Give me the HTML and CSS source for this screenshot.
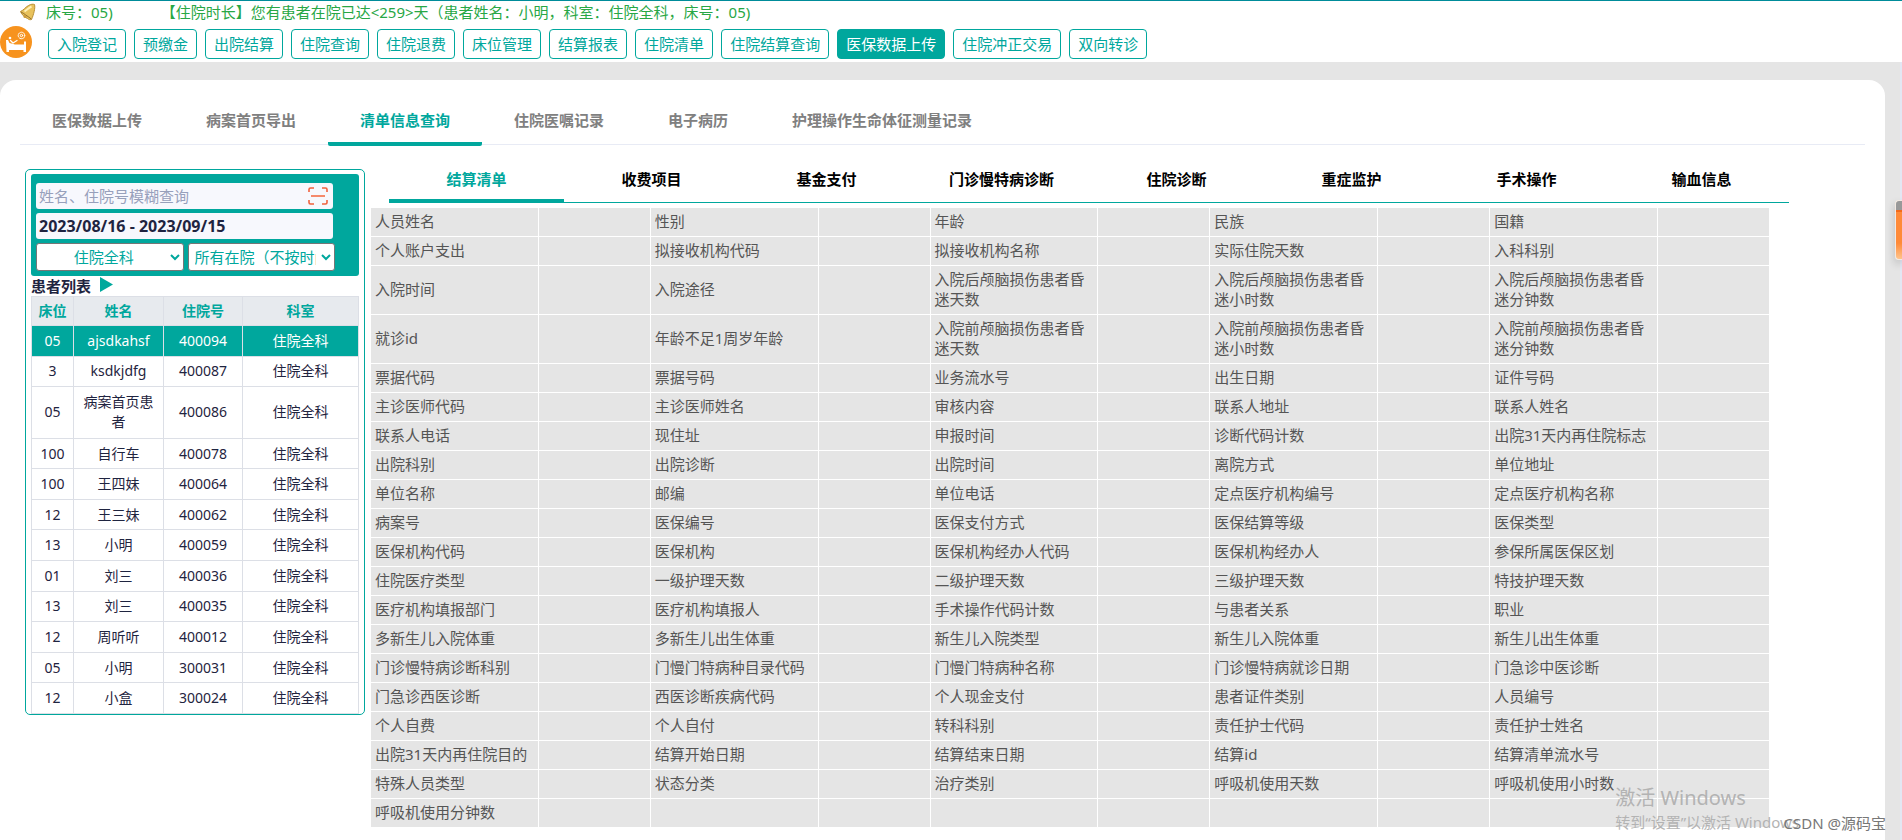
FILE: index.html
```html
<!DOCTYPE html>
<html lang="zh-CN">
<head>
<meta charset="utf-8">
<title>医保数据上传</title>
<link rel="stylesheet" href="styles.css">
</head>
<body>
<header class="top">
  <div class="notice">
    <svg class="bell" viewBox="0 0 18 18" aria-hidden="true">
      <path d="M1.500 8.500C5 7 6.500 4 9.500 2.500C12 1 14 1 15.500 1.500C16.500 5 14.500 12 12.500 16.500C11 17 9.500 16.500 8.500 15.500C6 14.500 2.500 11.500 1.500 8.500Z" fill="#e8c25c" stroke="#b98f35"/>
      <path d="M5.500 8.500C8 7 9.500 5 12.500 3.500" fill="none" stroke="#fff1b8" stroke-width="2"/>
      <path d="M2 9C5 10.500 7.500 12.500 12.300 16" fill="none" stroke="#94702c"/>
      <circle cx="6" cy="13.500" r="1.600" fill="#c99b3d"/>
    </svg>
    <span>床号：05)</span>
    <span class="notice-next">【住院时长】您有患者在院已达&lt;259&gt;天（患者姓名：小明，科室：住院全科，床号：05)</span>
  </div>
  <nav class="menu">
    <svg class="logo" viewBox="0 0 32 32" aria-hidden="true">
      <circle cx="16" cy="16" r="16" fill="#f7931e"/>
      <g fill="none" stroke="#fff" stroke-linecap="round" stroke-linejoin="round">
        <circle cx="21.500" cy="9.500" r="3.300" stroke-width="1" stroke-dasharray="2 1"/>
        <circle cx="21.500" cy="9.500" r="1.200" stroke-width="1"/>
        <circle cx="10" cy="12" r="1.300" fill="#fff" stroke="none"/>
        <path d="M10.500 14.500L13 17L17 14.500" stroke-width="1.300"/>
      </g>
      <path d="M6 14H8L9.500 17L15 18.500H24V15.500H26V26H23.500V24H9V26H6.500Z" fill="#fff"/>
    </svg>
    <button type="button">入院登记</button>
    <button type="button">预缴金</button>
    <button type="button">出院结算</button>
    <button type="button">住院查询</button>
    <button type="button">住院退费</button>
    <button type="button">床位管理</button>
    <button type="button">结算报表</button>
    <button type="button">住院清单</button>
    <button type="button">住院结算查询</button>
    <button type="button" class="on">医保数据上传</button>
    <button type="button">住院冲正交易</button>
    <button type="button">双向转诊</button>
  </nav>
</header>

<main class="card">
  <nav class="tabs">
    <a href="#upload">医保数据上传</a>
    <a href="#export">病案首页导出</a>
    <a href="#list" class="on">清单信息查询</a>
    <a href="#orders">住院医嘱记录</a>
    <a href="#emr">电子病历</a>
    <a href="#nursing">护理操作生命体征测量记录</a>
  </nav>

  <div class="body">
    <aside class="side">
      <form class="filter">
        <div class="search">
          <input type="text" aria-label="患者查询" placeholder="姓名、住院号模糊查询">
          <button type="button" aria-label="扫码">
            <svg viewBox="0 0 20 18" aria-hidden="true">
              <path d="M1 5V2.500Q1 1 2.500 1H6M14 1H17.500Q19 1 19 2.500V5M19 13V15.500Q19 17 17.500 17H14M6 17H2.500Q1 17 1 15.500V13" fill="none" stroke="#f0603c" stroke-width="1.600"/>
              <path d="M3 9H17" stroke="#f58a6c" stroke-width="2"/>
            </svg>
          </button>
        </div>
        <input class="date" type="text" aria-label="日期范围" value="2023/08/16 - 2023/09/15">
        <div class="pair">
          <select class="dept" aria-label="科室"><option>住院全科</option></select>
          <select aria-label="住院状态"><option>所有在院（不按时间）</option></select>
        </div>
      </form>
      <h2 class="side-title">患者列表
        <svg viewBox="0 0 13 15" aria-hidden="true"><path d="M0 0L13 7.500L0 15Z" fill="#00a99d"/></svg>
      </h2>
      <table class="patients">
        <colgroup><col class="c-bed"><col class="c-name"><col class="c-no"><col></colgroup>
        <thead><tr><th>床位</th><th>姓名</th><th>住院号</th><th>科室</th></tr></thead>
        <tbody>
          <tr class="on"><td>05</td><td>ajsdkahsf</td><td>400094</td><td>住院全科</td></tr>
          <tr><td>3</td><td>ksdkjdfg</td><td>400087</td><td>住院全科</td></tr>
          <tr><td>05</td><td>病案首页患者</td><td>400086</td><td>住院全科</td></tr>
          <tr><td>100</td><td>自行车</td><td>400078</td><td>住院全科</td></tr>
          <tr><td>100</td><td>王四妹</td><td>400064</td><td>住院全科</td></tr>
          <tr><td>12</td><td>王三妹</td><td>400062</td><td>住院全科</td></tr>
          <tr><td>13</td><td>小明</td><td>400059</td><td>住院全科</td></tr>
          <tr><td>01</td><td>刘三</td><td>400036</td><td>住院全科</td></tr>
          <tr><td>13</td><td>刘三</td><td>400035</td><td>住院全科</td></tr>
          <tr><td>12</td><td>周听听</td><td>400012</td><td>住院全科</td></tr>
          <tr><td>05</td><td>小明</td><td>300031</td><td>住院全科</td></tr>
          <tr><td>12</td><td>小盒</td><td>300024</td><td>住院全科</td></tr>
        </tbody>
      </table>
    </aside>

    <section class="detail">
      <nav class="subtabs">
        <a href="#s1" class="on">结算清单</a>
        <a href="#s2">收费项目</a>
        <a href="#s3">基金支付</a>
        <a href="#s4">门诊慢特病诊断</a>
        <a href="#s5">住院诊断</a>
        <a href="#s6">重症监护</a>
        <a href="#s7">手术操作</a>
        <a href="#s8">输血信息</a>
      </nav>
      <table class="fields">
        <colgroup><col class="k"><col class="v"><col class="k"><col class="v"><col class="k"><col class="v"><col class="k"><col class="v"><col class="k"><col class="v"></colgroup>
        <tbody>
          <tr><th>人员姓名</th><td></td><th>性别</th><td></td><th>年龄</th><td></td><th>民族</th><td></td><th>国籍</th><td></td></tr>
          <tr><th>个人账户支出</th><td></td><th>拟接收机构代码</th><td></td><th>拟接收机构名称</th><td></td><th>实际住院天数</th><td></td><th>入科科别</th><td></td></tr>
          <tr><th>入院时间</th><td></td><th>入院途径</th><td></td><th>入院后颅脑损伤患者昏迷天数</th><td></td><th>入院后颅脑损伤患者昏迷小时数</th><td></td><th>入院后颅脑损伤患者昏迷分钟数</th><td></td></tr>
          <tr><th>就诊id</th><td></td><th>年龄不足1周岁年龄</th><td></td><th>入院前颅脑损伤患者昏迷天数</th><td></td><th>入院前颅脑损伤患者昏迷小时数</th><td></td><th>入院前颅脑损伤患者昏迷分钟数</th><td></td></tr>
          <tr><th>票据代码</th><td></td><th>票据号码</th><td></td><th>业务流水号</th><td></td><th>出生日期</th><td></td><th>证件号码</th><td></td></tr>
          <tr><th>主诊医师代码</th><td></td><th>主诊医师姓名</th><td></td><th>审核内容</th><td></td><th>联系人地址</th><td></td><th>联系人姓名</th><td></td></tr>
          <tr><th>联系人电话</th><td></td><th>现住址</th><td></td><th>申报时间</th><td></td><th>诊断代码计数</th><td></td><th>出院31天内再住院标志</th><td></td></tr>
          <tr><th>出院科别</th><td></td><th>出院诊断</th><td></td><th>出院时间</th><td></td><th>离院方式</th><td></td><th>单位地址</th><td></td></tr>
          <tr><th>单位名称</th><td></td><th>邮编</th><td></td><th>单位电话</th><td></td><th>定点医疗机构编号</th><td></td><th>定点医疗机构名称</th><td></td></tr>
          <tr><th>病案号</th><td></td><th>医保编号</th><td></td><th>医保支付方式</th><td></td><th>医保结算等级</th><td></td><th>医保类型</th><td></td></tr>
          <tr><th>医保机构代码</th><td></td><th>医保机构</th><td></td><th>医保机构经办人代码</th><td></td><th>医保机构经办人</th><td></td><th>参保所属医保区划</th><td></td></tr>
          <tr><th>住院医疗类型</th><td></td><th>一级护理天数</th><td></td><th>二级护理天数</th><td></td><th>三级护理天数</th><td></td><th>特技护理天数</th><td></td></tr>
          <tr><th>医疗机构填报部门</th><td></td><th>医疗机构填报人</th><td></td><th>手术操作代码计数</th><td></td><th>与患者关系</th><td></td><th>职业</th><td></td></tr>
          <tr><th>多新生儿入院体重</th><td></td><th>多新生儿出生体重</th><td></td><th>新生儿入院类型</th><td></td><th>新生儿入院体重</th><td></td><th>新生儿出生体重</th><td></td></tr>
          <tr><th>门诊慢特病诊断科别</th><td></td><th>门慢门特病种目录代码</th><td></td><th>门慢门特病种名称</th><td></td><th>门诊慢特病就诊日期</th><td></td><th>门急诊中医诊断</th><td></td></tr>
          <tr><th>门急诊西医诊断</th><td></td><th>西医诊断疾病代码</th><td></td><th>个人现金支付</th><td></td><th>患者证件类别</th><td></td><th>人员编号</th><td></td></tr>
          <tr><th>个人自费</th><td></td><th>个人自付</th><td></td><th>转科科别</th><td></td><th>责任护士代码</th><td></td><th>责任护士姓名</th><td></td></tr>
          <tr><th>出院31天内再住院目的</th><td></td><th>结算开始日期</th><td></td><th>结算结束日期</th><td></td><th>结算id</th><td></td><th>结算清单流水号</th><td></td></tr>
          <tr><th>特殊人员类型</th><td></td><th>状态分类</th><td></td><th>治疗类别</th><td></td><th>呼吸机使用天数</th><td></td><th>呼吸机使用小时数</th><td></td></tr>
          <tr><th>呼吸机使用分钟数</th><td></td><th></th><td></td><th></th><td></td><th></th><td></td><th></th><td></td></tr>
        </tbody>
      </table>
    </section>
  </div>
</main>

<div class="handle"></div>
<div class="activate">
  <p class="activate-title">激活 Windows</p>
  <p>转到“设置”以激活 Windows</p>
</div>
<div class="credit">CSDN @源码宝</div>
</body>
</html>
```
FILE: styles.css
```css
* { box-sizing: border-box; }

body {
  margin: 0;
  height: 100vh;
  overflow: hidden;
  position: relative;
  display: flex;
  flex-direction: column;
  background: linear-gradient(to left, #e3e7f3 2px, #e5e5e5 2px);
  color: #1f2440;
  font: 15px/20px "Noto Sans", "Noto Sans CJK SC", sans-serif;
}

button, input, select { font: inherit; }
a { text-decoration: none; }
p, h2 { margin: 0; }

.top {
  flex: none;
  height: 62px;
  background: #fff;
  border-top: 1px solid #008c9a;
}

.notice {
  display: flex;
  align-items: center;
  height: 22px;
  padding-left: 19px;
  color: #28a745;
  white-space: nowrap;
}
.bell { width: 18px; height: 18px; margin-right: 9px; }
.notice-next { margin-left: 48px; }

.menu {
  display: flex;
  align-items: center;
  gap: 8px;
  height: 39px;
  padding-top: 3px;
}
.logo { width: 32px; height: 32px; margin: 0 8px 4px 0; }
.menu button {
  height: 30px;
  padding: 0 8px;
  border: 1px solid #00a79d;
  border-radius: 4px;
  background: #fff;
  color: #00a79d;
  white-space: nowrap;
}
.menu .on { background: #00a79d; color: #fff; }

.card {
  flex: 1;
  min-height: 0;
  margin: 18px 17px 0 0;
  padding: 16px 20px 0;
  background: #fff;
  border-radius: 16px 16px 0 0;
  overflow: hidden;
}

.tabs {
  display: flex;
  height: 49px;
  border-bottom: 1px solid #e8ebf5;
}
.tabs a {
  height: 50px;
  padding: 14px 32px 0;
  color: #808080;
  font-weight: bold;
}
.tabs .on {
  color: #00a79d;
  border-bottom: 4px solid #00a79d;
  border-radius: 2px;
}

.body {
  display: flex;
  align-items: flex-start;
  gap: 6px;
  padding: 24px 76px 0 5px;
}

.side {
  flex: none;
  width: 340px;
  padding: 4px 5px 0;
  border: 1px solid #00a79d;
  border-radius: 5px;
}
.filter {
  display: flex;
  flex-direction: column;
  gap: 4px;
  padding: 9px 24px 5px 5px;
  border-radius: 3px;
  background: #00a79d;
}
.search {
  display: flex;
  align-items: center;
  height: 26px;
  margin-right: 2px;
  padding-right: 5px;
  border-radius: 3px;
  background: #f7f8fd;
}
.search input {
  flex: 1;
  min-width: 0;
  height: 26px;
  padding: 0 3px;
  border: 0;
  background: transparent;
}
.search input::placeholder { color: #97a0bb; }
.search button {
  display: flex;
  padding: 0;
  border: 0;
  background: transparent;
}
.search svg { width: 20px; height: 18px; }
.date {
  height: 26px;
  margin-right: 2px;
  padding: 0 3px;
  border: 0;
  border-radius: 3px;
  background: #f7f8fd;
  color: #1f2440;
  font-size: 16px;
  font-weight: bold;
}
.pair { display: flex; gap: 4px; }
.pair select {
  flex: 1;
  min-width: 0;
  height: 28px;
  padding: 0 2px;
  border: 1px solid #767676;
  border-radius: 3px;
  background: #fff;
  color: #00a79d;
}
.pair .dept { text-align: center; }

.side-title {
  display: flex;
  align-items: center;
  gap: 9px;
  height: 20px;
  font-size: 15px;
}
.side-title svg { width: 13px; height: 15px; margin-bottom: 4px; }

.patients {
  width: 100%;
  height: 418px;
  table-layout: fixed;
  border-collapse: collapse;
  font-size: 14px;
  text-align: center;
}
.c-bed { width: 42px; }
.c-name { width: 90px; }
.c-no { width: 79px; }
.patients th, .patients td {
  padding: 4px 6px;
  border: 1px solid #dcdfe6;
}
.patients th { background: #e7eaee; color: #00a79d; }
.patients .on td { background: #00a79d; color: #fff; }

.detail { flex: 1; min-width: 0; }
.subtabs {
  display: flex;
  height: 34px;
  margin-left: 18px;
  border-bottom: 1px solid #00a79d;
}
.subtabs a {
  flex: 1;
  height: 34px;
  color: #000;
  font-weight: bold;
  text-align: center;
}
.subtabs .on { color: #00a79d; border-bottom: 4px solid #00a79d; }

.fields {
  width: calc(100% - 19px);
  margin-top: 5px;
  table-layout: fixed;
  border-collapse: separate;
  border-spacing: 0;
  color: #555;
}
.k { width: 12%; }
.v { width: 8%; }
.fields th, .fields td {
  height: 29px;
  padding: 3px 4px 5px;
  border: 0 solid #fff;
  border-width: 0 1px 1px 0;
  background: #e5e5e5;
  font-weight: normal;
  text-align: left;
}

.handle {
  position: absolute;
  top: 200px;
  right: 0;
  width: 7px;
  height: 60px;
  border: 1px solid #f3e9e2;
  border-right: 0;
  border-radius: 4px 0 0 4px;
  background: linear-gradient(#999 0 9px, #f26a1b 9px 11px, #ff8a38 11px 42px, #ffc48c);
  box-shadow: 0 4px 8px rgba(0, 0, 0, .2);
}

.activate {
  position: absolute;
  right: 103px;
  bottom: 6px;
  color: #b3b3b3;
  line-height: 24px;
  white-space: nowrap;
}
.activate-title { font-size: 20px; }

.credit {
  position: absolute;
  right: 16px;
  bottom: 7px;
  color: #777;
}
```
